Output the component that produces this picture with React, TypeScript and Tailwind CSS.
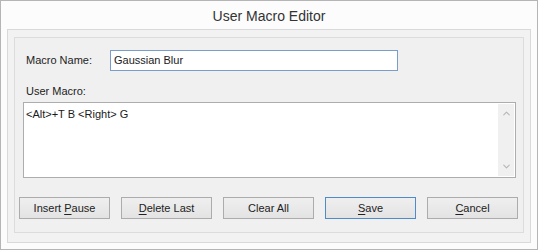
import { ChevronUp, ChevronDown } from "lucide-react";

const font = { fontFamily: '"Liberation Sans", Arial, sans-serif' };

const DialogButton = ({
  children,
  primary,
}: {
  children: React.ReactNode;
  primary?: boolean;
}) => (
  <button
    className={`w-[91px] h-[22px] flex items-center justify-center text-[11px] text-[#222] bg-gradient-to-b from-[#efefef] to-[#e3e3e3] border ${
      primary ? "border-[#4f8bc9]" : "border-[#acacac]"
    }`}
  >
    <span>{children}</span>
  </button>
);

const App = () => {
  return (
    <div
      className="w-[538px] h-[250px] bg-[#fcfcfc] border border-[#b5b5b5] flex flex-col"
      style={font}
    >
      {/* title bar */}
      <div className="h-[28px] flex items-center justify-center text-[14px] text-[#333] pt-[2px]">
        User Macro Editor
      </div>

      <div className="mx-[6px] h-[214px] bg-[#f2f2f2] border border-[#d9d9d9] pt-[7px] px-[6px]">
        <div className="h-[196px] bg-[#f0f0f0] border border-[#dcdcdc] flex flex-col">
          <div className="flex items-center mt-[12px] ml-[11px]">
            <span className="w-[84px] text-[11px] text-[#222]">
              Macro Name:
            </span>
            <div className="w-[288px] h-[21px] bg-white border border-[#7a9ecb] flex items-center pl-[3px] text-[11px] text-[#1a1a1a]">
              Gaussian Blur
            </div>
          </div>

          <div className="mt-[13px] ml-[11px] text-[11px] text-[#222] leading-[14px]">
            User Macro:
          </div>

          <div className="mt-[4px] ml-[8px] w-[493px] h-[76px] bg-white border border-[#adadad] flex">
            <div className="flex-1 pl-[2px] pt-[3px] text-[11px] text-[#1a1a1a]">
              &lt;Alt&gt;+T B &lt;Right&gt; G
            </div>
            <div className="w-[16px] mr-[1px] my-[1px] bg-[#f0f0f0] flex flex-col items-center justify-between py-[4px]">
              <ChevronUp size={11} strokeWidth={2.2} className="text-[#b4b4b4]" />
              <ChevronDown size={11} strokeWidth={2.2} className="text-[#b4b4b4]" />
            </div>
          </div>

          <div className="mt-[19px] ml-[4px] flex gap-[11px]">
            <DialogButton>
              Insert <span className="underline underline-offset-2">P</span>ause
            </DialogButton>
            <DialogButton>
              <span className="underline underline-offset-2">D</span>elete Last
            </DialogButton>
            <DialogButton>Clear All</DialogButton>
            <DialogButton primary>
              <span className="underline underline-offset-2">S</span>ave
            </DialogButton>
            <DialogButton>
              <span className="underline underline-offset-2">C</span>ancel
            </DialogButton>
          </div>
        </div>
      </div>
    </div>
  );
};

export default App;
